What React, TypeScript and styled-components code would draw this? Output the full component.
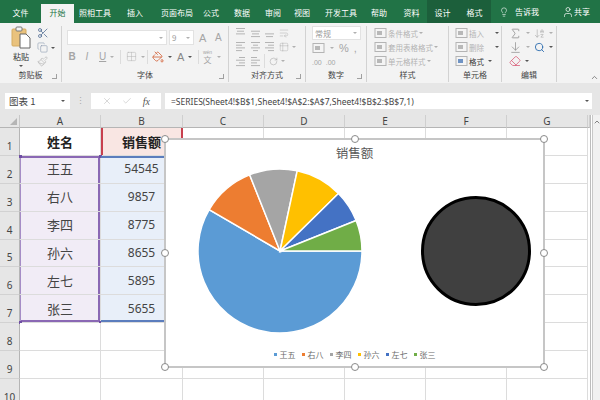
import React from 'react';
import styled, { createGlobalStyle } from 'styled-components';
import {
  Scissors, Copy, Paintbrush, Lightbulb, User, Search, Eraser, ChevronUp, X, Check, Sigma, ArrowDownAZ,
  ArrowDownToLine, Table2, Grid2x2, PaintBucket, WrapText, RotateCw,
} from 'lucide-react';

const cjk = `"Noto Sans CJK SC", "Noto Sans", sans-serif`;

const GlobalStyle = createGlobalStyle`
  html, body { margin: 0; padding: 0; background: #fff; }
  body { font-family: ${cjk}; }
`;

const Page = styled.div`
  width: 600px;
  height: 400px;
  overflow: hidden;
  display: flex;
  flex-direction: column;
  background: #fff;
`;

/* ---- tabs ---- */
const TabBar = styled.div`
  height: 23px;
  flex: none;
  display: flex;
  align-items: flex-end;
  background: #217346;
  color: #fff;
`;

const Tab = styled.div<{ $w: number; $active?: boolean; $context?: boolean }>`
  width: ${p => p.$w}px;
  height: ${p => (p.$context ? 23 : 19)}px;
  padding: ${p => (p.$context ? '4px 0 2px' : '0 0 2px')};
  box-sizing: border-box;
  display: flex;
  align-items: center;
  justify-content: center;
  font-size: 8px;
  white-space: nowrap;
  background: ${p => (p.$active ? '#f3f3f3' : p.$context ? '#1c5f3b' : 'transparent')};
  color: ${p => (p.$active ? '#217346' : '#fff')};
`;

const TellMe = styled.div`
  display: flex;
  align-items: center;
  gap: 6px;
  height: 19px;
  padding: 0 0 2px 8px;
  font-size: 8px;
`;

const ShareBox = styled(TellMe)`
  margin-left: 15px;
  gap: 0;
`;

/* ---- ribbon ---- */
const Ribbon = styled.div`
  height: 60px;
  flex: none;
  display: flex;
  padding: 3px 0 1px;
  box-sizing: border-box;
  background: #f3f3f3;
`;

const Group = styled.div<{ $w: number }>`
  position: relative;
  width: ${p => p.$w}px;
  flex: none;
  box-sizing: border-box;
  border-right: 1px solid #d2d2d2;
  display: flex;
  flex-direction: column;
`;

const GroupBody = styled.div`
  flex: 1;
  min-height: 0;
  display: flex;
`;

const GroupLabel = styled.div`
  height: 14px;
  line-height: 14px;
  text-align: center;
  font-size: 8px;
  color: #444;
`;

const Launcher = styled.span`
  position: absolute;
  right: 4px;
  bottom: 3px;
  width: 4px;
  height: 4px;
  border-left: 1px solid #a0a0a0;
  border-bottom: 1px solid #a0a0a0;
  transform: scaleX(-1);
`;

const Stack = styled.div<{ $pad?: string; $gap?: number }>`
  display: flex;
  flex-direction: column;
  gap: ${p => p.$gap ?? 0}px;
  padding: ${p => p.$pad ?? '0'};
  flex: 1;
`;

const Row = styled.div<{ $gap?: number; $h?: number }>`
  display: flex;
  align-items: center;
  gap: ${p => p.$gap ?? 0}px;
  height: ${p => (p.$h ? `${p.$h}px` : 'auto')};
`;

/* fixed-width slot so the small tools land on the same columns as the ribbon */
const Slot = styled.div<{ $w: number; $pad?: number; $center?: boolean }>`
  width: ${p => p.$w}px;
  flex: none;
  box-sizing: border-box;
  padding-left: ${p => p.$pad ?? 0}px;
  display: flex;
  align-items: center;
  justify-content: ${p => (p.$center ? 'center' : 'flex-start')};
  gap: 4px;
`;

const Caret = styled.i<{ $light?: boolean }>`
  display: inline-block;
  flex: none;
  width: 0;
  height: 0;
  border-left: 2px solid transparent;
  border-right: 2px solid transparent;
  border-top: 2px solid ${p => (p.$light ? '#b0b0b0' : '#555')};
`;

const PasteColumn = styled.div`
  width: 32px;
  display: flex;
  flex-direction: column;
  align-items: center;
  font-size: 8px;
  color: #333;
  padding-left: 5px;
  line-height: 10px;
  gap: 3px;
`;

const ClipTools = styled.div`
  display: flex;
  flex-direction: column;
  gap: 3px;
  padding: 1px 0 0;
`;

const InputBox = styled.div<{ $w: number; $h?: number }>`
  width: ${p => p.$w}px;
  height: ${p => p.$h ?? 15}px;
  flex: none;
  box-sizing: border-box;
  background: #fff;
  border: 1px solid #e2e2e2;
  display: flex;
  align-items: center;
  justify-content: space-between;
  padding: 0 3px 0 2px;
  font-size: 8px;
  color: #9a9a9a;
`;

const LetterBtn = styled.span<{ $size?: number; $weight?: number; $italic?: boolean; $under?: boolean; $color?: string }>`
  font-family: "Liberation Sans", sans-serif;
  font-size: ${p => p.$size ?? 10}px;
  font-weight: ${p => p.$weight ?? 400};
  font-style: ${p => (p.$italic ? 'italic' : 'normal')};
  text-decoration: ${p => (p.$under ? 'underline' : 'none')};
  color: ${p => p.$color ?? '#a5a5a5'};
  line-height: 14px;
`;

const Ruby = styled.span`
  display: flex;
  flex-direction: column;
  align-items: center;
  font-size: 8px;
  line-height: 9px;
  color: #a5a5a5;
  width: 11px;
`;

const RubyTop = styled.span`
  font-family: "Liberation Sans", sans-serif;
  font-size: 5px;
  line-height: 6px;
`;

const Divider = styled.span`
  width: 1px;
  height: 14px;
  flex: none;
  background: #dcdcdc;
`;

const StyleRow = styled.div<{ $dark?: boolean }>`
  display: flex;
  align-items: center;
  gap: 1px;
  height: 15px;
  font-size: 7.5px;
  white-space: nowrap;
  color: ${p => (p.$dark ? '#333' : '#b4b4b4')};
`;

const Collapse = styled.div`
  flex: 1;
  display: flex;
  align-items: flex-end;
  justify-content: flex-end;
  padding: 0 1px 0 0;
  color: #666;
`;

const Lines = ({ rows }: { rows: number[][] }) => (
  <svg width="11" height="11" viewBox="0 0 11 11">
    {rows.map((r, i) =>
      r.length ? (
        <line key={i} x1={r[0]} x2={r[1]} y1={1.5 + i * 2.7} y2={1.5 + i * 2.7} stroke="#b4b4b4" strokeWidth="1" />
      ) : null,
    )}
  </svg>
);

const CellIcon = ({ accent = '#b8b8b8' }: { accent?: string }) => (
  <svg width="13" height="12" viewBox="0 0 13 12">
    <rect x="1" y="1.5" width="11" height="9" fill="#f4f4f4" stroke="#b4b4b4" />
    <rect x="3" y="4" width="5" height="4" fill={accent} />
  </svg>
);

const PasteIcon = () => (
  <svg width="20" height="23" viewBox="0 0 20 23">
    <rect x="1" y="3" width="14" height="17" rx="1" fill="#e9c27d" stroke="#d5ac62" />
    <rect x="5" y="1" width="6" height="4" rx="1" fill="#f3f3f3" stroke="#777" />
    <path d="M9 8h6l4 4v10H9z" fill="#fff" stroke="#666" />
  </svg>
);

/* ---- formula bar ---- */
const FormulaBar = styled.div`
  height: 32px;
  flex: none;
  display: flex;
  align-items: flex-end;
  gap: 4px;
  padding: 0 8px 6px 5px;
  box-sizing: border-box;
  background: #e6e6e6;
`;

const NameBox = styled.div`
  width: 65px;
  height: 16px;
  flex: none;
  box-sizing: border-box;
  background: #fff;
  display: flex;
  align-items: center;
  justify-content: space-between;
  padding: 0 5px 0 4px;
  font-size: 9.5px;
  color: #444;
`;

const Grip = styled.div`
  width: 13px;
  flex: none;
  height: 16px;
  text-align: center;
  color: #aaa;
  font-size: 9px;
  line-height: 16px;
`;

const FxBox = styled.div`
  width: 70px;
  height: 16px;
  flex: none;
  background: #fff;
  display: flex;
  align-items: center;
  justify-content: space-around;
  padding: 0 6px;
  box-sizing: border-box;
  color: #bcbcbc;
`;

const FxLabel = styled.span`
  font-family: "Liberation Serif", serif;
  font-style: italic;
  font-size: 10px;
  color: #555;
`;

const FormulaInput = styled.div`
  flex: 1;
  height: 16px;
  background: #fff;
  display: flex;
  align-items: center;
  justify-content: space-between;
  padding: 0 3px 0 6px;
  font-family: "Noto Sans", sans-serif;
  font-size: 8.5px;
  color: #444;
  white-space: nowrap;
`;

/* ---- sheet ---- */
const Sheet = styled.div`
  position: relative;
  flex: 1;
  min-height: 0;
  overflow: hidden;
  display: flex;
  background: #fff;
`;

const SheetGrid = styled.div`
  width: 590px;
  flex: none;
  display: grid;
  grid-template-columns: 20px 81px 82px 81px 81px 81px 81px 81px 2px;
  grid-auto-rows: 27.9px;
  grid-template-rows: 13px;
  border-right: 1px solid #bdbdbd;
  box-sizing: content-box;
`;

const Corner = styled.div`
  background: #e6e6e6;
  border-bottom: 1px solid #b5b5b5;
  border-right: 1px solid #c8c8c8;
  box-sizing: border-box;
  display: flex;
  align-items: flex-end;
  justify-content: flex-end;
  padding: 0 2px 2px 0;
`;

const CornerMark = styled.i`
  width: 0;
  height: 0;
  border-left: 7px solid transparent;
  border-bottom: 7px solid #b5b5b5;
`;

const ColHead = styled.div`
  background: #e6e6e6;
  border-bottom: 1px solid #b5b5b5;
  border-right: 1px solid #cfcfcf;
  box-sizing: border-box;
  display: flex;
  align-items: center;
  justify-content: center;
  font-family: "Noto Sans", sans-serif;
  font-size: 10px;
  color: #444;
`;

const RowHead = styled.div`
  background: #e6e6e6;
  border-right: 1px solid #b5b5b5;
  border-bottom: 1px solid #d2d2d2;
  box-sizing: border-box;
  display: flex;
  align-items: flex-end;
  justify-content: center;
  padding-bottom: 2px;
  font-family: "Noto Sans", sans-serif;
  font-size: 10px;
  line-height: 13px;
  color: #444;
`;

const tones = {
  none: { bg: '#fff', edge: 'none' },
  series: { bg: '#f9e6e3', edge: 'inset 2px 0 0 #c8404e' },
  nameTop: { bg: '#f1ecf6', edge: 'inset 1px 0 0 #a58cc6, inset -2px 0 0 #8a68b4, inset 0 2px 0 #8a68b4' },
  name: { bg: '#f1ecf6', edge: 'inset 1px 0 0 #a58cc6, inset -2px 0 0 #8a68b4' },
  nameEnd: { bg: '#f1ecf6', edge: 'inset 1px 0 0 #a58cc6, inset -2px 0 0 #8a68b4, inset 0 -2px 0 #8a68b4' },
  valueTop: { bg: '#e8eff9', edge: 'inset 0 2px 0 #5b7dbd' },
  value: { bg: '#e8eff9', edge: 'none' },
  valueEnd: { bg: '#e8eff9', edge: 'inset 0 -2px 0 #5b7dbd' },
};

const Cell = styled.div<{ $tone?: keyof typeof tones; $head?: boolean }>`
  position: relative;
  box-sizing: border-box;
  border-right: 1px solid #dcdcdc;
  border-bottom: 1px solid #dcdcdc;
  background: ${p => tones[p.$tone ?? 'none'].bg};
  box-shadow: ${p => tones[p.$tone ?? 'none'].edge};
  display: flex;
  align-items: center;
  justify-content: center;
  padding-bottom: ${p => (p.$head ? 0 : 1)}px;
  font-size: 13px;
  font-weight: ${p => (p.$head ? 700 : 400)};
  color: ${p => (p.$head ? '#222' : '#444')};
`;

const Digits = styled.span`
  font-family: "Noto Sans", sans-serif;
  font-size: 12px;
`;

const RangeDot = styled.i<{ $x: 'left' | 'right'; $y: 'top' | 'bottom' }>`
  position: absolute;
  width: 3px;
  height: 3px;
  background: #6f4ea3;
  ${p => (p.$x === 'left' ? 'left: -1px;' : 'right: -2px;')}
  ${p => (p.$y === 'top' ? 'top: -1px;' : 'bottom: -2px;')}
`;

const RedTick = styled.i`
  position: absolute;
  top: 0;
  right: -1px;
  width: 2px;
  height: 10px;
  background: #c8404e;
`;

const ScrollTrack = styled.div`
  flex: 1;
  background: #f1f1f1;
  border-left: 1px solid #c8c8c8;
  color: #666;
  display: flex;
  flex-direction: column;
  align-items: center;
  margin-left: 1px;
  padding-top: 3px;
`;

/* ---- chart ---- */
const Chart = styled.div`
  position: absolute;
  left: 164px;
  top: 23px;
  width: 381px;
  height: 230px;
  box-sizing: border-box;
  background: #fff;
  border: 2px solid #c6c6c6;
  display: flex;
  flex-direction: column;
  align-items: center;
`;

const ChartTitle = styled.div`
  height: 23px;
  line-height: 25px;
  font-size: 12.5px;
  color: #595959;
`;

const PlotRow = styled.div`
  align-self: stretch;
  flex: 1;
  display: flex;
  align-items: flex-start;
  padding: 4px 0 0 30px;
  gap: 56px;
`;

const Blob = styled.svg`
  margin-top: 28px;
  flex: none;
`;

const Legend = styled.div`
  display: flex;
  gap: 6px;
  height: 14px;
  margin-bottom: 5px;
  align-items: center;
  font-size: 8px;
  color: #6a6a6a;
`;

const LegendItem = styled.span`
  display: flex;
  align-items: center;
  gap: 3px;
`;

const Swatch = styled.i<{ $c: string }>`
  width: 3px;
  height: 3px;
  background: ${p => p.$c};
`;

const Handle = styled.i<{ $l: string; $t: string }>`
  position: absolute;
  left: ${p => p.$l};
  top: ${p => p.$t};
  width: 8px;
  height: 8px;
  margin: -4px 0 0 -4px;
  box-sizing: border-box;
  border: 1.5px solid #8a8a8a;
  border-radius: 50%;
  background: #fff;
`;

const tabs = [
  { label: '文件', w: 41 },
  { label: '开始', w: 33, active: true },
  { label: '照相工具', w: 42 },
  { label: '插入', w: 38 },
  { label: '页面布局', w: 46 },
  { label: '公式', w: 22 },
  { label: '数据', w: 40 },
  { label: '审阅', w: 22 },
  { label: '视图', w: 36 },
  { label: '开发工具', w: 42 },
  { label: '帮助', w: 34 },
  { label: '资料', w: 31 },
  { label: '设计', w: 31, context: true },
  { label: '格式', w: 33, context: true },
];

const sales = [
  { name: '王五', value: 54545, color: '#5b9bd5' },
  { name: '右八', value: 9857, color: '#ed7d31' },
  { name: '李四', value: 8775, color: '#a5a5a5' },
  { name: '孙六', value: 8655, color: '#ffc000' },
  { name: '左七', value: 5895, color: '#4472c4' },
  { name: '张三', value: 5655, color: '#70ad47' },
];

const columns = ['A', 'B', 'C', 'D', 'E', 'F', 'G'];

const Pie = () => {
  const r = 82;
  const c = 84;
  const total = sales.reduce((s, d) => s + d.value, 0);
  let angle = 90;
  return (
    <svg width="168" height="168" viewBox="0 0 168 168">
      {sales.map(d => {
        const sweep = (d.value / total) * 360;
        const a = (angle * Math.PI) / 180;
        const b = ((angle + sweep) * Math.PI) / 180;
        angle += sweep;
        const path = `M${c} ${c}L${c + r * Math.sin(a)} ${c - r * Math.cos(a)}A${r} ${r} 0 ${sweep > 180 ? 1 : 0} 1 ${c + r * Math.sin(b)} ${c - r * Math.cos(b)}Z`;
        return <path key={d.name} d={path} fill={d.color} stroke="#fff" strokeWidth="1.5" />;
      })}
    </svg>
  );
};

const handles = [
  ['-1px', '-1px'], ['50%', '-1px'], ['calc(100% + 1px)', '-1px'],
  ['-1px', '50%'], ['calc(100% + 1px)', '50%'],
  ['-1px', 'calc(100% + 1px)'], ['50%', 'calc(100% + 1px)'], ['calc(100% + 1px)', 'calc(100% + 1px)'],
];

const rowTone = (i: number, kind: 'name' | 'value') =>
  (i === 0 ? `${kind}Top` : i === sales.length - 1 ? `${kind}End` : kind) as keyof typeof tones;

const App: React.FC = () => {
  const extraCells = (key: string | number, count = 5) =>
    Array.from({ length: count }, (_, i) => <Cell key={`${key}-${i}`} />);

  return (
    <Page>
      <GlobalStyle />
      <TabBar>
        {tabs.map(t => (
          <Tab key={t.label} $w={t.w} $active={t.active} $context={t.context}>{t.label}</Tab>
        ))}
        <TellMe><Lightbulb size={10} strokeWidth={1.4} />告诉我</TellMe>
        <ShareBox><User size={12} strokeWidth={1.4} />共享</ShareBox>
      </TabBar>

      <Ribbon>
        <Group $w={62}>
          <GroupBody>
            <PasteColumn>
              <PasteIcon />
              粘贴
              <Caret />
            </PasteColumn>
            <ClipTools>
              <Scissors size={12} color="#3f5f8a" strokeWidth={1.4} />
              <Row $gap={3}><Copy size={11} color="#8a9ab0" strokeWidth={1.3} /><Caret /></Row>
              <Paintbrush size={11} color="#b5b5b5" strokeWidth={1.4} />
            </ClipTools>
          </GroupBody>
          <GroupLabel>剪贴板</GroupLabel>
          <Launcher />
        </Group>

        <Group $w={167}>
          <GroupBody>
            <Stack $pad="4px 0 0 5px" $gap={4}>
              <Row $gap={2}>
                <InputBox $w={100}><span /><Caret $light /></InputBox>
                <InputBox $w={25}>9<Caret $light /></InputBox>
                <Slot $w={14} $pad={3}><LetterBtn $size={11}>A</LetterBtn></Slot>
                <Slot $w={14} $pad={3}><LetterBtn $size={10}>A</LetterBtn></Slot>
              </Row>
              <Row>
                <Slot $w={10} $center><LetterBtn $weight={700}>B</LetterBtn></Slot>
                <Slot $w={20} $center><LetterBtn $italic>I</LetterBtn></Slot>
                <Slot $w={23} $pad={2}><LetterBtn $under>U</LetterBtn><Caret $light /></Slot>
                <Divider />
                <Slot $w={26} $pad={5}><Grid2x2 size={11} color="#b8b8b8" strokeWidth={1.2} /><Caret $light /></Slot>
                <Divider />
                <Slot $w={28} $pad={4}><PaintBucket size={12} color="#d0562a" strokeWidth={1.5} /><Caret /></Slot>
                <Slot $w={22} $pad={1}><LetterBtn $size={11} $color="#888">A</LetterBtn><Caret /></Slot>
                <Divider />
                <Slot $w={24} $pad={3}>
                  <Ruby><RubyTop>wén</RubyTop>文</Ruby>
                  <Caret $light />
                </Slot>
              </Row>
            </Stack>
          </GroupBody>
          <GroupLabel>字体</GroupLabel>
          <Launcher />
        </Group>

        <Group $w={77}>
          <GroupBody>
            <Stack $pad="0 0 0 6px" $gap={1}>
              <Row $gap={3.5} $h={14}>
                <Lines rows={[[1, 10], [2, 9], [1, 10]]} />
                <Lines rows={[[], [1, 10], [2, 9], [1, 10]]} />
                <Lines rows={[[], [], [1, 10], [2, 9]]} />
                <WrapText size={10} color="#b4b4b4" strokeWidth={1.3} />
              </Row>
              <Row $gap={3.5} $h={14}>
                <Lines rows={[[1, 10], [1, 7], [1, 10], [1, 7]]} />
                <Lines rows={[[1, 10], [3, 8], [1, 10], [3, 8]]} />
                <Lines rows={[[1, 10], [4, 10], [1, 10], [4, 10]]} />
                <Table2 size={10} color="#b4b4b4" strokeWidth={1.2} />
                <Caret $light />
              </Row>
              <Row $gap={3.5} $h={14}>
                <Lines rows={[[4, 10], [1, 10], [4, 10], [1, 10]]} />
                <Lines rows={[[1, 7], [1, 10], [1, 7], [1, 10]]} />
                <Divider />
                <RotateCw size={9} color="#a5a5a5" strokeWidth={1.4} />
                <Caret $light />
              </Row>
            </Stack>
          </GroupBody>
          <GroupLabel>对齐方式</GroupLabel>
          <Launcher />
        </Group>

        <Group $w={61}>
          <GroupBody>
            <Stack $pad="0 0 0 6px" $gap={1}>
              <InputBox $w={49} $h={14}>常规<Caret $light /></InputBox>
              <Row $gap={5} $h={15}>
                <CellIcon />
                <Caret $light />
                <LetterBtn $size={11}>%</LetterBtn>
                <LetterBtn $size={11}>,</LetterBtn>
              </Row>
              <Row $gap={4} $h={14}>
                <LetterBtn $size={7}>.00</LetterBtn>
                <LetterBtn $size={7}>.00</LetterBtn>
              </Row>
            </Stack>
          </GroupBody>
          <GroupLabel>数字</GroupLabel>
          <Launcher />
        </Group>

        <Group $w={82}>
          <GroupBody>
            <Stack $pad="0 0 0 7px">
              <StyleRow><CellIcon />条件格式 <Caret $light /></StyleRow>
              <StyleRow><CellIcon />套用表格格式 <Caret $light /></StyleRow>
              <StyleRow><CellIcon />单元格样式 <Caret $light /></StyleRow>
            </Stack>
          </GroupBody>
          <GroupLabel>样式</GroupLabel>
        </Group>

        <Group $w={53}>
          <GroupBody>
            <Stack $pad="0 0 0 6px">
              <StyleRow><CellIcon />插入<Slot $w={16} $pad={10}><Caret /></Slot></StyleRow>
              <StyleRow><CellIcon />删除<Slot $w={16} $pad={10}><Caret /></Slot></StyleRow>
              <StyleRow $dark><CellIcon accent="#6f93c4" />格式<Slot $w={16} $pad={3}><Caret /></Slot></StyleRow>
            </Stack>
          </GroupBody>
          <GroupLabel>单元格</GroupLabel>
        </Group>

        <Group $w={55}>
          <GroupBody>
            <Stack $pad="0 0 0 7px">
              <Row $gap={4} $h={15}>
                <Sigma size={13} color="#8a8a8a" strokeWidth={1.4} />
                <Caret $light />
                <ArrowDownAZ size={11} color="#a8a8a8" strokeWidth={1.3} />
                <Caret $light />
              </Row>
              <Row $gap={4} $h={15}>
                <ArrowDownToLine size={13} color="#8a8a8a" strokeWidth={1.3} />
                <Caret $light />
                <Search size={11} color="#2f6fb0" strokeWidth={2} />
                <Caret />
              </Row>
              <Row $gap={4} $h={15}>
                <Eraser size={12} color="#d9607a" strokeWidth={1.6} />
                <Caret />
              </Row>
            </Stack>
          </GroupBody>
          <GroupLabel>编辑</GroupLabel>
        </Group>

        <Collapse><ChevronUp size={9} strokeWidth={2} /></Collapse>
      </Ribbon>

      <FormulaBar>
        <NameBox>图表 1<Caret /></NameBox>
        <Grip>⋮</Grip>
        <FxBox>
          <X size={10} strokeWidth={1.4} />
          <Check size={10} strokeWidth={1.4} />
          <FxLabel>fx</FxLabel>
        </FxBox>
        <FormulaInput>
          =SERIES(Sheet4!$B$1,Sheet4!$A$2:$A$7,Sheet4!$B$2:$B$7,1)
          <Caret />
        </FormulaInput>
      </FormulaBar>

      <Sheet>
        <SheetGrid>
          <Corner><CornerMark /></Corner>
          {columns.map(c => <ColHead key={c}>{c}</ColHead>)}
          <ColHead />

          <RowHead>1</RowHead>
          <Cell $head>姓名</Cell>
          <Cell $head $tone="series">销售额<RedTick /></Cell>
          {extraCells('r1')}
          <span />

          {sales.map((d, i) => (
            <React.Fragment key={d.name}>
              <RowHead>{i + 2}</RowHead>
              <Cell $tone={rowTone(i, 'name')}>
                {d.name}
                {i === 0 && <><RangeDot $x="left" $y="top" /><RangeDot $x="right" $y="top" /></>}
                {i === sales.length - 1 && <><RangeDot $x="left" $y="bottom" /><RangeDot $x="right" $y="bottom" /></>}
              </Cell>
              <Cell $tone={rowTone(i, 'value')}><Digits>{d.value}</Digits></Cell>
              {extraCells(d.name)}
              <span />
            </React.Fragment>
          ))}

          {[8, 9, 10].map(n => (
            <React.Fragment key={n}>
              <RowHead>{n}</RowHead>
              {extraCells(n, 7)}
              <span />
            </React.Fragment>
          ))}
        </SheetGrid>
        <ScrollTrack><ChevronUp size={8} strokeWidth={2.4} /></ScrollTrack>

        <Chart>
          <ChartTitle>销售额</ChartTitle>
          <PlotRow>
            <Pie />
            <Blob width="112" height="112" viewBox="0 0 112 112">
              <circle cx="56" cy="56" r="53.5" fill="#404040" stroke="#000" strokeWidth="3" />
            </Blob>
          </PlotRow>
          <Legend>
            {sales.map(d => (
              <LegendItem key={d.name}><Swatch $c={d.color} />{d.name}</LegendItem>
            ))}
          </Legend>
          {handles.map(([l, t]) => <Handle key={l + t} $l={l} $t={t} />)}
        </Chart>
      </Sheet>
    </Page>
  );
};

export default App;
